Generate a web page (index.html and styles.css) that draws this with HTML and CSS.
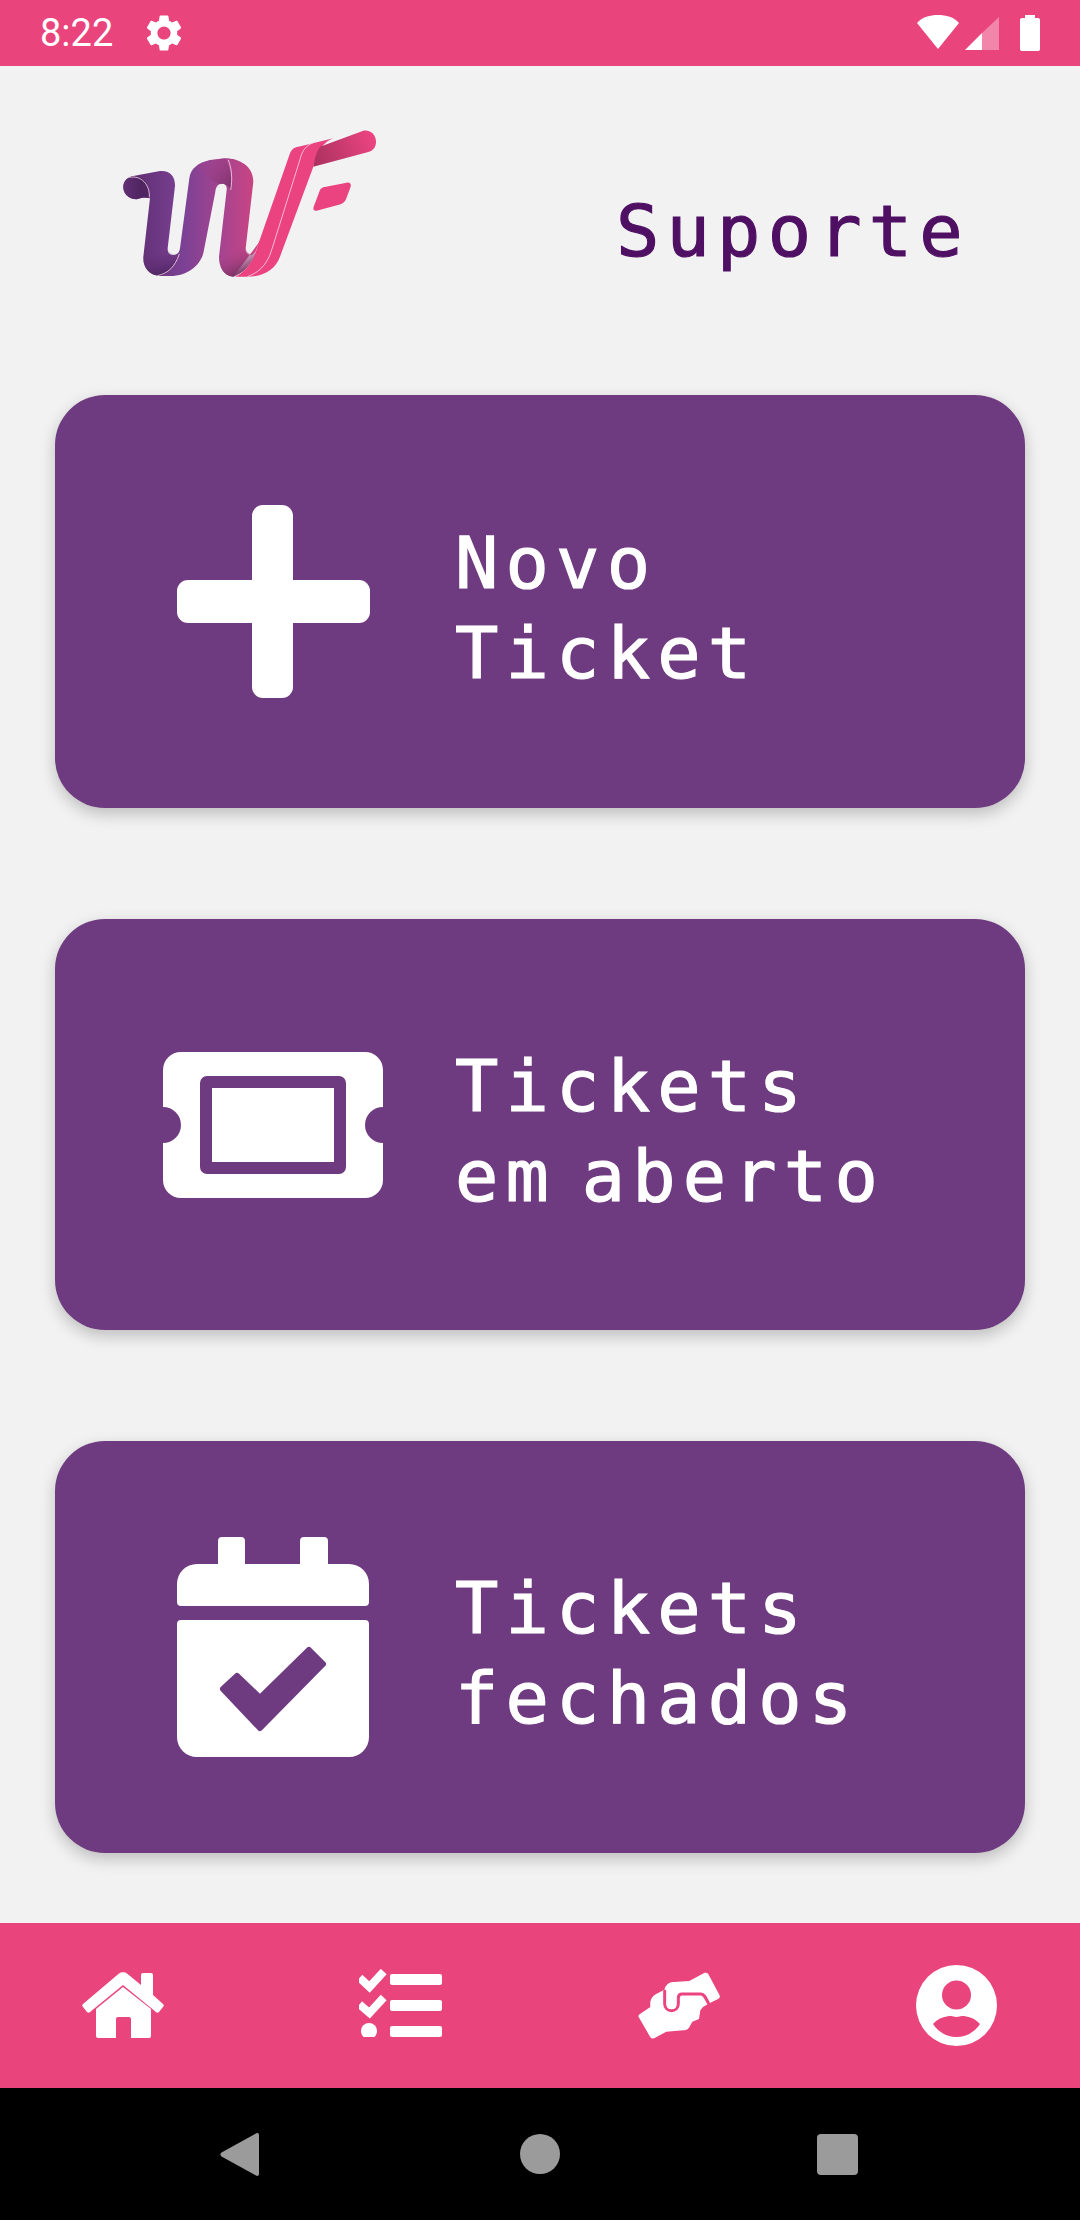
FILE: index.html
```html
<!DOCTYPE html>
<html lang="pt">
<head>
<meta charset="utf-8">
<title>Suporte</title>
<link rel="stylesheet" href="styles.css">
</head>
<body>
<div class="phone">
  <div class="status">
    <span class="time">8:22</span>
    <svg class="gear" viewBox="0 0 24 24"><path fill="#fff" d="M19.14 12.94c.04-.3.06-.61.06-.94 0-.32-.02-.64-.07-.94l2.03-1.58c.18-.14.23-.41.12-.61l-1.92-3.32c-.12-.22-.37-.29-.59-.22l-2.39.96c-.5-.38-1.03-.7-1.62-.94l-.36-2.54c-.04-.24-.24-.41-.48-.41h-3.84c-.24 0-.43.17-.47.41l-.36 2.54c-.59.24-1.13.57-1.62.94l-2.39-.96c-.22-.08-.47 0-.59.22L2.74 8.87c-.12.21-.08.47.12.61l2.03 1.58c-.05.3-.09.63-.09.94s.02.64.07.94l-2.03 1.58c-.18.14-.23.41-.12.61l1.92 3.32c.12.22.37.29.59.22l2.39-.96c.5.38 1.03.7 1.62.94l.36 2.54c.05.24.24.41.48.41h3.84c.24 0 .44-.17.47-.41l.36-2.54c.59-.24 1.13-.56 1.62-.94l2.39.96c.22.08.47 0 .59-.22l1.92-3.32c.12-.22.07-.47-.12-.61l-2.01-1.58zM12 15.6c-1.98 0-3.6-1.62-3.6-3.6s1.62-3.6 3.6-3.6 3.6 1.62 3.6 3.6-1.62 3.6-3.6 3.6z"/></svg>
    <svg class="sysicons" viewBox="916 14 124 38">
      <path fill="#fff" d="M916 23C921 17 929 15 937 15C945 15 953 17 958 23L937 49Z"/>
      <path fill="#fff" fill-opacity=".35" d="M981 33L998 17V50H981Z"/>
      <path fill="#fff" d="M964 50L981 33V50Z"/>
      <path fill="#fff" d="M1024 15H1034V18H1037C1038.500 18 1039 19 1039 20V49C1039 50.500 1038 51 1037 51H1021C1020 51 1019 50.500 1019 49V20C1019 19 1019.500 18 1021 18H1024Z"/>
    </svg>
  </div>

  <header class="top">
    <svg class="logo" viewBox="0 0 900 540">
      <defs>
        <linearGradient id="ribbon" x1="130" y1="0" x2="480" y2="0" gradientUnits="userSpaceOnUse">
          <stop offset="0" stop-color="#653279"/>
          <stop offset=".35" stop-color="#7c4195"/>
          <stop offset=".7" stop-color="#a9448f"/>
          <stop offset="1" stop-color="#d1447f"/>
        </linearGradient>
        <linearGradient id="flag" x1="640" y1="160" x2="820" y2="90" gradientUnits="userSpaceOnUse">
          <stop offset="0" stop-color="#a9325f"/>
          <stop offset="1" stop-color="#ea4380"/>
        </linearGradient>
        <linearGradient id="foldA" x1="120" y1="230" x2="60" y2="230" gradientUnits="userSpaceOnUse">
          <stop offset="0" stop-color="#4f2562"/>
          <stop offset="1" stop-color="#673378"/>
        </linearGradient>
        <linearGradient id="foldB" x1="180" y1="420" x2="200" y2="495" gradientUnits="userSpaceOnUse">
          <stop offset="0" stop-color="#653279" stop-opacity="0"/>
          <stop offset="1" stop-color="#4c2460"/>
        </linearGradient>
        <linearGradient id="foldC" x1="300" y1="170" x2="390" y2="230" gradientUnits="userSpaceOnUse">
          <stop offset="0" stop-color="#a9448f" stop-opacity=".2"/>
          <stop offset="1" stop-color="#7e3370"/>
        </linearGradient>
        <linearGradient id="foldD" x1="385" y1="420" x2="420" y2="495" gradientUnits="userSpaceOnUse">
          <stop offset="0" stop-color="#b3458c" stop-opacity="0"/>
          <stop offset="1" stop-color="#73305f"/>
        </linearGradient>
      </defs>
      <path fill="url(#ribbon)" d="M70 232C70 212 82 202 100 198L180 183C210 180 226 200 225 228L203 415C202 432 212 436 222 435C232 434 238 428 240 415L268 205C272 175 295 158 330 150L375 145C420 145 460 170 460 215L437 415C436 430 448 437 455 435C463 433 468 425 472 410L490 380L400 500C370 498 357 470 357 440L380 240C382 225 372 220 362 222C352 224 348 232 346 245L310 430C300 465 265 498 210 498L180 498C145 495 128 470 130 440L150 265C135 262 125 262 110 268C85 268 70 250 70 232Z"/>
      <path fill="url(#foldA)" d="M70 232C70 212 82 202 100 198C130 195 150 225 148 262C135 262 125 262 110 268C85 268 70 250 70 232Z"/>
      <path fill="url(#foldB)" d="M130 440C128 470 145 495 180 498C205 490 225 470 238 430C230 436 210 438 203 415L135 400Z"/>
      <path fill="url(#foldC)" d="M290 165C310 155 340 148 375 145C390 170 398 205 392 240C385 225 372 220 362 222C345 222 310 190 290 165Z"/>
      <path fill="url(#foldD)" d="M357 440C357 470 370 498 400 500C430 490 455 465 472 420C465 436 445 440 437 415L362 400Z"/>
      <path fill="#ea4380" d="M472 410L570 130C575 118 582 112 595 110L700 85C660 100 650 140 640 170L540 440C525 480 490 500 440 500H405C430 490 460 460 472 410Z"/>
      <path fill="url(#flag)" d="M660 110L790 62C812 58 828 75 828 95C828 112 818 122 805 126L640 170C645 140 650 125 660 110Z"/>
      <path fill="none" stroke="#f6d4e2" stroke-width="2.500" d="M88 202C125 195 150 225 148 262M238 432C225 470 205 490 172 497M640 98C610 110 605 130 598 155L515 420C500 470 470 490 442 500M385 150C395 175 398 205 392 240"/>
      <path fill="#ea4380" d="M670 232L740 218C750 216 754 222 752 230L738 268C735 275 730 280 722 283L650 302C642 303 638 298 641 290L658 245C660 238 664 234 670 232Z"/>
    </svg>
    <h1 class="title">Suporte</h1>
  </header>

  <main class="cards">
    <a class="card">
      <span class="card-icon">
        <svg width="193" height="193" viewBox="0 0 193 193"><rect x="75" width="41" height="193" rx="11" fill="#fff"/><rect y="75" width="193" height="43" rx="11" fill="#fff"/></svg>
      </span>
      <span class="card-text">Novo<br>Ticket</span>
    </a>
    <a class="card">
      <span class="card-icon">
        <svg width="220" height="146" viewBox="0 0 220 146"><path fill="#fff" fill-rule="evenodd" d="M18 0H202A18 18 0 0 1 220 18V55A18 18 0 0 0 220 91V128A18 18 0 0 1 202 146H18A18 18 0 0 1 0 128V91A18 18 0 0 0 0 55V18A18 18 0 0 1 18 0ZM44 24A7 7 0 0 0 37 31V115A7 7 0 0 0 44 122H176A7 7 0 0 0 183 115V31A7 7 0 0 0 176 24ZM49 36H171V110H49Z"/></svg>
      </span>
      <span class="card-text">Tickets<br>em aberto</span>
    </a>
    <a class="card">
      <span class="card-icon">
        <svg width="192" height="220" viewBox="0 0 192 220"><path fill="#fff" d="M45 0H64A4 4 0 0 1 68 4V27H123V4A4 4 0 0 1 127 0H147A4 4 0 0 1 151 4V27H172A20 20 0 0 1 192 47V65A4 4 0 0 1 188 69H4A4 4 0 0 1 0 65V47A20 20 0 0 1 20 27H41V4A4 4 0 0 1 45 0ZM4 83H188A4 4 0 0 1 192 87V200A20 20 0 0 1 172 220H20A20 20 0 0 1 0 200V87A4 4 0 0 1 4 83Z"/><path class="cut" d="M46 152L60 139L83 161L132 113L146 127L83 191Z"/></svg>
      </span>
      <span class="card-text">Tickets<br>fechados</span>
    </a>
  </main>

  <nav class="tabs">
    <svg class="tab-home" width="82" height="68" viewBox="0 0 82 68"><path fill="#fff" d="M41 16L14 38V65A2 2 0 0 0 16 67H34V48A2 2 0 0 1 36 46H47A2 2 0 0 1 49 48V67H67A2 2 0 0 0 69 65V38Z"/><path fill="#fff" d="M37 2.500C39 .8 43 .8 45 2.500L59 14V4A2 2 0 0 1 61 2H69A2 2 0 0 1 71 4V24L81 33C82 34 82 35 81 36L77 41C76 42 75 42 74 41L41 14L8 41C7 42 6 42 5 41L1 36C0 35 0 34 1 33Z"/></svg>
    <svg class="tab-tasks" width="83" height="68" viewBox="0 0 83 68"><path fill="none" stroke="#fff" stroke-width="8" stroke-linecap="square" d="M3.500 11.500L10.500 18L22 5.500M3.500 38L10.500 44L22 31.500"/><circle cx="10" cy="62" r="8" fill="#fff"/><rect x="31" y="5" width="52" height="11" rx="2" fill="#fff"/><rect x="31" y="31" width="52" height="11" rx="2" fill="#fff"/><rect x="31" y="57" width="52" height="11" rx="2" fill="#fff"/></svg>
    <svg width="83" height="68" viewBox="51 65 249 204"><path fill="#fff" d="M58 190L88 170C86 150 92 140 104 132L130 118C135 100 148 95 160 95L205 92L248 69C254 66 260 68 263 73L295 133C298 139 296 143 291 146L262 160L246 170L238 180L234 206L214 214L204 232C200 238 194 240 186 240L136 244L101 263C95 266 90 264 87 259L53 200C51 196 53 193 58 190Z"/><path fill="none" stroke="#ec4480" stroke-width="9" stroke-linecap="round" stroke-linejoin="round" d="M131 122V160C131 188 172 188 172 160V142C172 134 177 131 184 131H240C248 131 252 138 262 158"/></svg>
    <svg width="81" height="81" viewBox="0 0 81 81"><circle cx="40.500" cy="40.500" r="40.500" fill="#fff"/><circle cx="40.500" cy="30" r="14.500" fill="#ea447d"/><path fill="#ea447d" d="M17 59C22 53 30 51 35 51C37 51 38 52 40.500 52C43 52 44 51 46 51C51 51 59 53 64 59C59 67 50 72 40.500 72C31 72 22 67 17 59Z"/></svg>
  </nav>

  <div class="sysnav">
    <svg width="39" height="43" viewBox="0 0 39 43"><path fill="#9b9b9b" d="M36 0.500C37.800 -.5 39 .5 39 2V41C39 42.500 37.800 43.500 36 42.500L1.500 23.500C0 22.500 0 20.500 1.500 19.500Z"/></svg>
    <svg class="nav-home" width="40" height="40" viewBox="0 0 40 40"><circle cx="20" cy="20" r="20" fill="#9b9b9b"/></svg>
    <svg class="nav-recent" width="41" height="41" viewBox="0 0 41 41"><rect width="41" height="41" rx="4" fill="#9b9b9b"/></svg>
  </div>
</div>
</body>
</html>
```
FILE: styles.css
```css
html, body {
  margin: 0;
  padding: 0;
  background: #f2f2f2;
}

.phone {
  width: 1080px;
  height: 2220px;
  display: flex;
  flex-direction: column;
  overflow: hidden;
  font-family: "DejaVu Sans Mono", "Liberation Mono", monospace;
}

.status {
  height: 66px;
  flex: none;
  display: flex;
  align-items: center;
  padding: 0 40px;
  background: #ea447d;
}

.time {
  font-family: Roboto, sans-serif;
  font-size: 38px;
  color: #fff;
  line-height: 66px;
}

.gear {
  width: 44px;
  height: 44px;
  margin-left: 29px;
}

.sysicons {
  width: 124px;
  height: 38px;
  margin-left: auto;
  margin-right: -1px;
}

.top {
  height: 329px;
  flex: none;
  display: flex;
  align-items: flex-start;
  padding-left: 100px;
  box-sizing: border-box;
}

.logo {
  width: 300px;
  height: 180px;
  margin-top: 44px;
  flex: none;
}

.title {
  margin: 120px 0 0 216px;
  font-size: 72px;
  font-weight: 400;
  line-height: 90px;
  letter-spacing: 7.200px;
  color: #4f0f63;
  -webkit-text-stroke: 1.200px #4f0f63;
  white-space: nowrap;
}

.cards {
  flex: 1;
  display: flex;
  flex-direction: column;
  gap: 111px;
  padding: 0 55px;
}

.card {
  height: 412px;
  flex: none;
  display: flex;
  align-items: center;
  background: #6f3b80;
  border-radius: 50px;
  box-shadow: 0 6px 16px rgba(0, 0, 0, 0.22);
}

.card:nth-child(1) {
  height: 413px;
}

.card:nth-child(2) {
  height: 411px;
}

.card-icon {
  width: 220px;
  margin-left: 108px;
  display: flex;
  justify-content: center;
  flex: none;
}

.card-text {
  margin-left: 72px;
  padding-top: 12px;
  font-size: 72px;
  line-height: 90px;
  letter-spacing: 7.200px;
  word-spacing: -25px;
  color: #fff;
  -webkit-text-stroke: 1.200px #fff;
  white-space: nowrap;
}

.cut {
  fill: #6f3b80;
  stroke: #6f3b80;
  stroke-width: 6;
  stroke-linejoin: round;
}

.tabs {
  height: 165px;
  flex: none;
  display: flex;
  align-items: center;
  justify-content: space-between;
  padding: 0 83px 0 82px;
  background: #ea447d;
}

.tab-home {
  margin-bottom: 2px;
}

.tab-tasks {
  margin-bottom: 5px;
}

.sysnav {
  height: 132px;
  flex: none;
  display: flex;
  align-items: center;
  padding-left: 220px;
  background: #000;
}

.nav-home {
  margin-left: 261px;
}

.nav-recent {
  margin-left: 257px;
}
```
